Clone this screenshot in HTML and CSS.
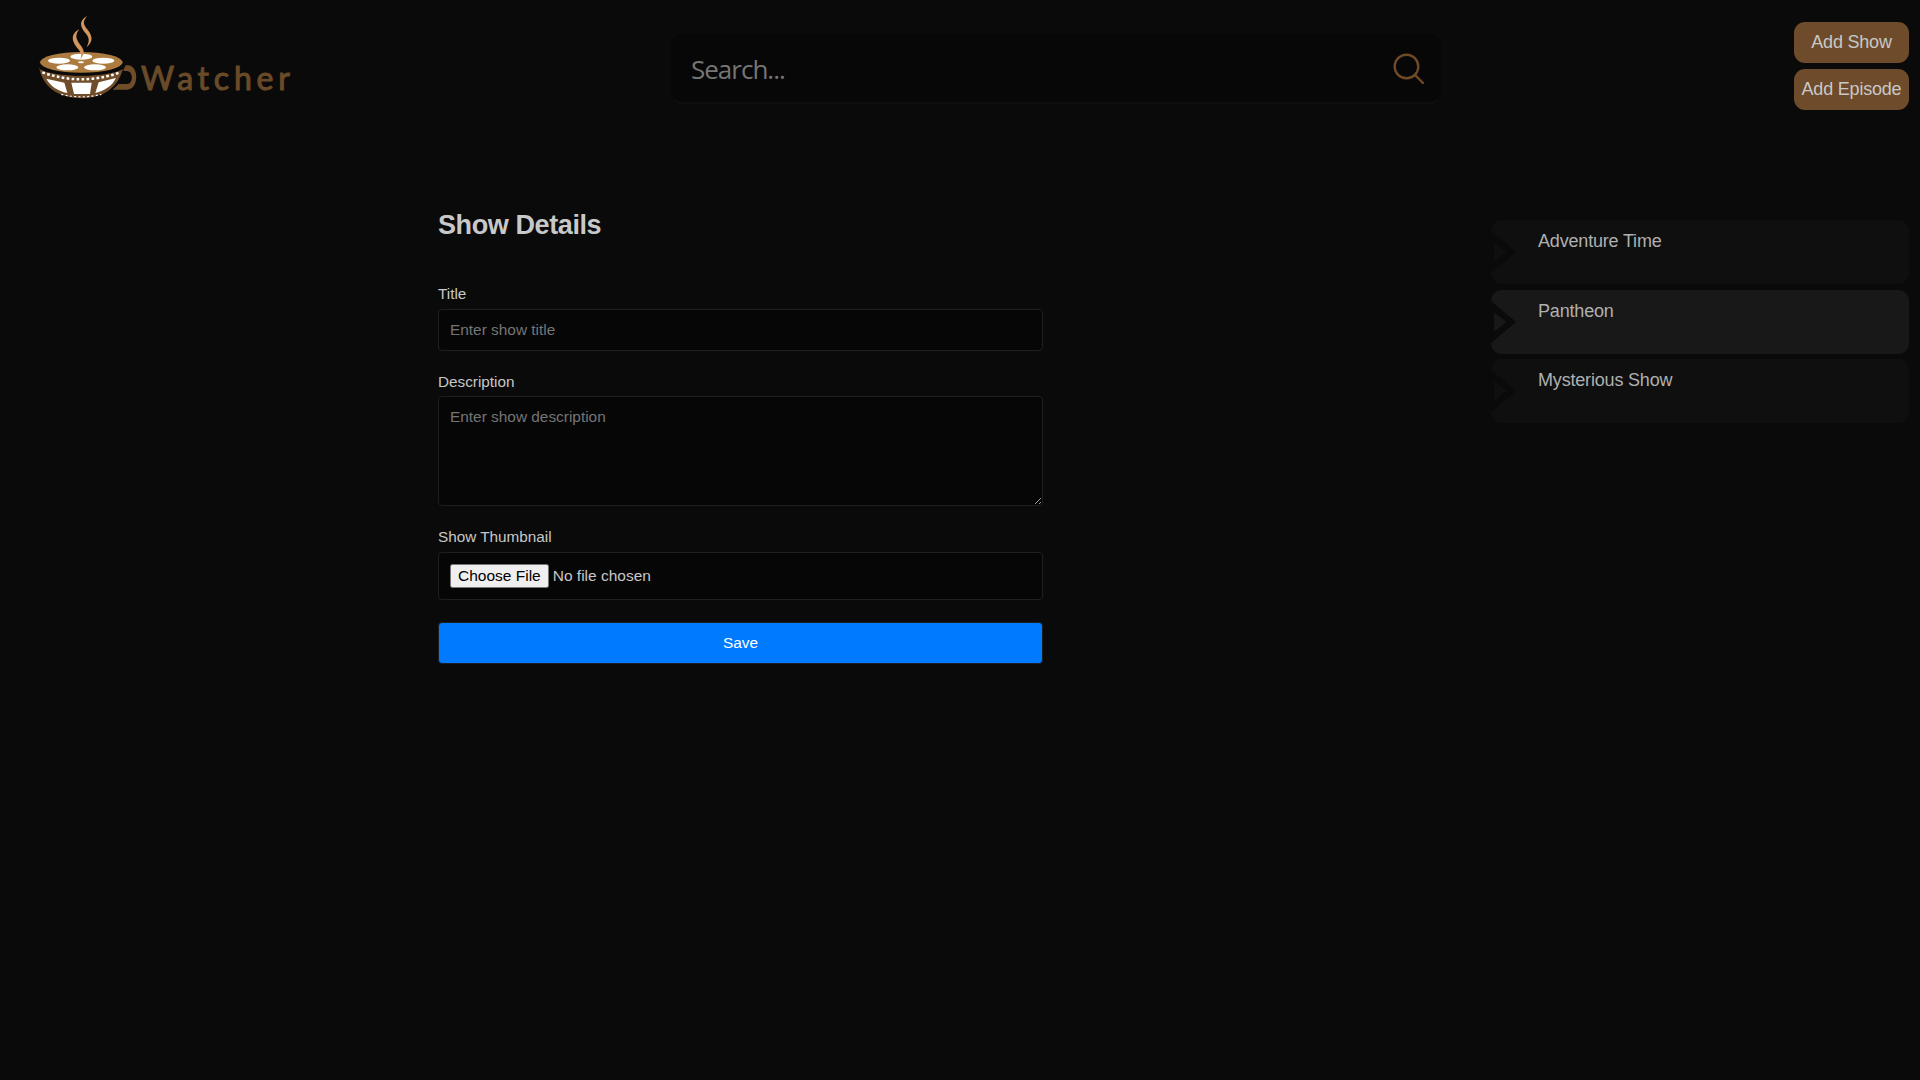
FILE: index.html
```html
<!DOCTYPE html>
<html lang="en">
<head>
<meta charset="utf-8">
<title>Watcher</title>
<link rel="stylesheet" href="styles.css">
</head>
<body>
<header class="topbar">
  <a class="brand">
    <svg class="brand-cup" viewBox="0 0 420 285" width="140" height="95">
      <path d="M248 239 L266 222 H292 C310 222 311 183 290 183 H277 L287 166 H296 C328 170 326 239 292 239 Z" fill="#704d2a"/>
      <path d="M25 168 C35 230 82 266 154 266 C226 266 268 230 283 168 Z" fill="#704d2a" stroke="#0a0a0a" stroke-width="3"/>
      <path d="M25 164 C58 200 250 200 283 164 L279 177 C238 204 70 204 29 177 Z" fill="#0a0a0a"/>
      <path d="M37 187 Q154 229 270 187" fill="none" stroke="#fff" stroke-width="7.500" stroke-dasharray="8 7"/>
      <path d="M49 206 L103 218 L112 249 C83 243 61 228 49 206 Z M124 218 H185 L180 252 H132 Z M206 217 L258 204 C246 228 225 242 196 249 Z" fill="#fff"/>
      <path d="M94 253 Q154 268 214 253" fill="none" stroke="#fff" stroke-width="3.500" stroke-dasharray="6 7"/>
      <ellipse cx="154" cy="159" rx="128" ry="37" fill="#0a0a0a"/>
      <ellipse cx="154" cy="157" rx="124" ry="31" fill="#ab7b40"/>
      <g fill="#fff">
        <ellipse cx="154" cy="140" rx="33" ry="9"/>
        <ellipse cx="87" cy="152" rx="33" ry="9"/>
        <ellipse cx="220" cy="152" rx="33" ry="9"/>
        <ellipse cx="112" cy="172" rx="33" ry="9"/>
        <ellipse cx="195" cy="172" rx="33" ry="9"/>
        <ellipse cx="153" cy="157" rx="9" ry="3"/>
      </g>
      <path d="M148 58 C119 73 126 96 145 118 C154 129 155 137 151 148 C169 129 160 116 149 102 C135 83 137 72 148 58 Z" fill="#d2955f"/>
      <path d="M172 18 C145 32 150 51 168 71 C180 85 177 97 170 111 C191 94 187 77 173 59 C158 42 158 33 172 18 Z" fill="#d2955f"/>
    </svg>
    <span class="brand-name">Watcher</span>
  </a>
  <div class="search">
    <input class="search-input" type="text" placeholder="Search...">
    <svg class="search-icon" viewBox="0 0 32 32" width="32" height="32" fill="none" stroke="#704a27" stroke-width="2.4" stroke-linecap="round">
      <circle cx="13.5" cy="13.5" r="11.8"/><path d="M22 22 L30 30"/>
    </svg>
  </div>
  <nav class="actions">
    <button class="action">Add Show</button>
    <button class="action">Add Episode</button>
  </nav>
</header>
<main class="content">
  <form class="details">
    <h2 class="details-title">Show Details</h2>
    <label class="label" for="title">Title</label>
    <input class="field" id="title" type="text" placeholder="Enter show title">
    <label class="label" for="description">Description</label>
    <textarea class="field field-area" id="description" placeholder="Enter show description"></textarea>
    <label class="label" for="thumb">Show Thumbnail</label>
    <input class="field field-file" id="thumb" type="file">
    <button class="field save" type="button">Save</button>
  </form>
  <aside class="shows">
    <div class="show">
      <svg class="chevron" viewBox="0 0 26 64" width="26" height="64"><path d="M0 11 L25 32 L0 53 Z" fill="#0a0a0a"/><path d="M3 22 L15.500 32 L3 42 Z" fill="#0f0f0f"/></svg>
      <span class="show-name">Adventure Time</span>
    </div>
    <div class="show show-active">
      <svg class="chevron" viewBox="0 0 26 64" width="26" height="64"><path d="M0 11 L25 32 L0 53 Z" fill="#0a0a0a"/><path d="M3 22 L15.500 32 L3 42 Z" fill="#181818"/></svg>
      <span class="show-name">Pantheon</span>
    </div>
    <div class="show">
      <svg class="chevron" viewBox="0 0 26 64" width="26" height="64"><path d="M0 11 L25 32 L0 53 Z" fill="#0a0a0a"/><path d="M3 22 L15.500 32 L3 42 Z" fill="#0f0f0f"/></svg>
      <span class="show-name">Mysterious Show</span>
    </div>
  </aside>
</main>
</body>
</html>
```
FILE: styles.css
```css
* { box-sizing: border-box; }
body {
  margin: 0;
  min-height: 100vh;
  background: #0a0a0a;
  color: #c8c8c8;
  font-family: "Liberation Sans", Arial, sans-serif;
}
.topbar {
  display: grid;
  grid-template-columns: 641px 770px 1fr;
  padding: 10px 11px 0 30px;
  height: 138px;
}
.brand { display: flex; align-items: flex-start; }
.brand-name {
  margin: 48px 0 0 -29px;
  font: 400 32px/40px Lato, sans-serif;
  letter-spacing: 4.8px;
  color: #6a4b28;
  -webkit-text-stroke: 1px #6a4b28;
}
.search {
  display: flex;
  align-items: center;
  justify-content: space-between;
  margin-top: 24px;
  height: 70px;
  padding: 2px 16px 0 20px;
  background: #070707;
  border-bottom: 2px solid #0f0f0f;
  border-radius: 12px;
}
.search-input {
  flex: 1;
  padding: 0;
  border: 0;
  outline: 0;
  background: transparent;
  color: #c8c8c8;
  font: 26px "Open Sans", sans-serif;
  letter-spacing: -1px;
}
.actions {
  display: flex;
  flex-direction: column;
  align-items: flex-end;
  gap: 6px;
  padding-top: 12px;
}
.action {
  width: 115px;
  height: 41px;
  padding: 0;
  border: 0;
  border-radius: 11px;
  background: #6e4b2a;
  color: #c8c8c8;
  font: 18px "Liberation Sans", Arial, sans-serif;
  letter-spacing: -0.2px;
}
.content {
  display: flex;
  justify-content: space-between;
  padding: 72px 11px 0 438px;
}
.details { display: flex; flex-direction: column; width: 605px; }
.details-title {
  margin: 0 0 44px;
  font-size: 27px;
  line-height: 30px;
  letter-spacing: -0.4px;
}
.label {
  height: 25px;
  font-size: 15.300px;
  line-height: 20px;
}
.field {
  width: 100%;
  height: 42px;
  margin: 0 0 21px;
  padding: 11px;
  border: 1px solid #1f1f1f;
  border-radius: 4px;
  background: #060606;
  color: #c8c8c8;
  font: 15.400px "Liberation Sans", Arial, sans-serif;
}
.field::placeholder, .search-input::placeholder { color: #757575; }
.field-area { height: 110px; margin-top: -1px; }
.field-file { height: 48px; margin-bottom: 22px; font-size: 15.500px; }
.save { background: #007bff; color: #fff; }
.shows {
  display: flex;
  flex-direction: column;
  gap: 5.500px;
  width: 418px;
  padding-top: 10px;
}
.show {
  display: flex;
  gap: 21px;
  height: 64px;
  overflow: hidden;
  border-radius: 11px;
  background: #0f0f0f;
}
.show-active { background: #181818; }
.show-name {
  padding-top: 11px;
  font-size: 18px;
  line-height: 20px;
  letter-spacing: -0.18px;
  color: #b0b0b0;
}
```
